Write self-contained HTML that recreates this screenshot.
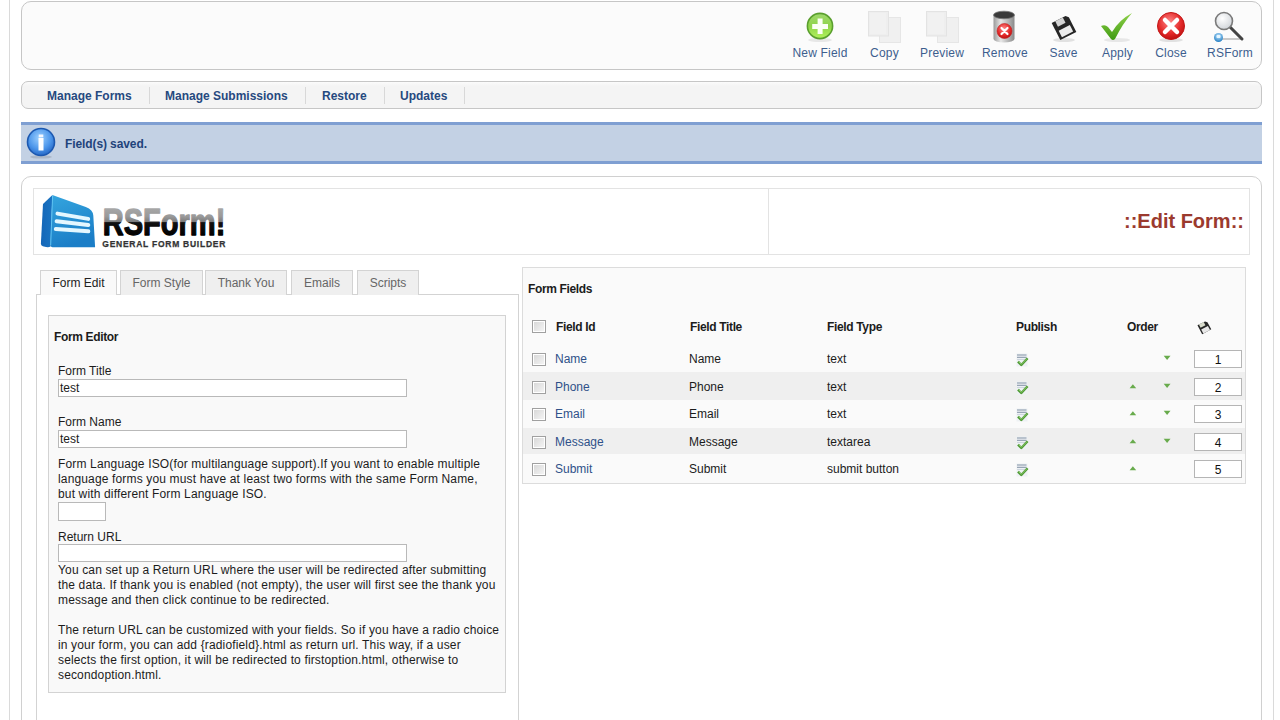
<!DOCTYPE html>
<html><head><meta charset="utf-8">
<style>
*{box-sizing:border-box;margin:0;padding:0}
html,body{width:1280px;height:720px;overflow:hidden;background:#fff}
body{position:relative;font-family:"Liberation Sans",sans-serif;font-size:12px;color:#1c1c1c}
.a{position:absolute}
.t{position:absolute;white-space:nowrap;line-height:15px}
.vl{position:absolute;top:0;width:1px;height:720px;background:#dadada}
#toolbar{left:21px;top:1px;width:1241px;height:69px;border:1px solid #c6c6c6;border-radius:10px;background:#fbfbfb}
#submenu{left:21px;top:81px;width:1241px;height:28px;border:1px solid #c6c6c6;border-radius:7px;background:linear-gradient(#fbfbfb,#f4f4f4 4px,#f4f4f4)}
#msg{left:21px;top:122px;width:1241px;height:42px;border-top:3px solid #7f9fd2;border-bottom:3px solid #7f9fd2;background:#c3d1e4}
#main{left:21px;top:176px;width:1241px;height:600px;border:1px solid #d0d0d0;border-radius:10px;background:#fff}
#hdr{left:33px;top:188px;width:1217px;height:67px;border:1px solid #e3e3e3;background:#fff}
#panel{left:36px;top:294px;width:483px;height:500px;border:1px solid #d3d3d3;background:#fff}
.tab{position:absolute;top:270px;height:25px;border:1px solid #d3d3d3;border-bottom:none;background:#efefef;color:#666;text-align:center;line-height:24px;font-size:12px}
.tab.on{background:#f9f9f9;color:#222;height:25px}
#fs{left:48px;top:315px;width:458px;height:378px;border:1px solid #d3d3d3;background:#f9f9f9}
.inp{position:absolute;height:18px;border:1px solid #b9b9b9;background:#fff;font-size:12px;line-height:15px;padding-left:1px;padding-top:1px}
#ff{left:522px;top:267px;width:724px;height:217px;border:1px solid #dcdcdc;background:#fafafa}
.row2{position:absolute;left:523px;width:722px;background:#efefef}
.sm{position:absolute;font-weight:bold;color:#26497f;font-size:12px}
.sep{position:absolute;top:87px;width:1px;height:17px;background:#d8d8d8}
.tl{position:absolute;top:46px;color:#3d5e8e;font-size:12px;text-align:center;letter-spacing:0.2px}
.lnk{color:#2f5189}
.p{letter-spacing:0.15px}
.b{font-weight:bold;letter-spacing:-0.35px}
.cb{position:absolute;width:14px;height:13px;border:1px solid #a0a0a0;box-shadow:inset 0 0 0 1px #fff;background:linear-gradient(135deg,#d6d6d6,#f6f6f6)}
.ord{position:absolute;width:48px;height:18px;border:1px solid #b5b5b5;background:#fff;text-align:center;line-height:16px;padding-top:1px;font-size:12px;color:#111}
</style></head><body>
<div class="vl" style="left:9px"></div>
<div class="vl" style="left:1273px"></div>

<div id="toolbar" class="a"></div>
<div id="submenu" class="a"></div>
<div id="msg" class="a"></div>
<div id="main" class="a"></div>
<div id="hdr" class="a"></div>
<div class="a" style="left:768px;top:188px;width:1px;height:67px;background:#e3e3e3"></div>


<!-- toolbar icons -->
<svg class="a" style="left:790px;top:8px" width="470" height="40" viewBox="790 8 470 40">
 <defs>
  <radialGradient id="gG" cx="0.45" cy="0.35" r="0.7"><stop offset="0" stop-color="#c9f08a"/><stop offset="0.6" stop-color="#8fd23c"/><stop offset="1" stop-color="#5aa51c"/></radialGradient>
  <linearGradient id="gG2" x1="0" y1="0" x2="0" y2="1"><stop offset="0" stop-color="#9fd86e"/><stop offset="0.5" stop-color="#8fd449"/><stop offset="1" stop-color="#b2f25c"/></linearGradient>
  <radialGradient id="rG" cx="0.45" cy="0.35" r="0.7"><stop offset="0" stop-color="#ff8b8b"/><stop offset="0.6" stop-color="#e42a2a"/><stop offset="1" stop-color="#b70d0d"/></radialGradient>
  <linearGradient id="binG" x1="0" x2="1"><stop offset="0" stop-color="#9a9a9a"/><stop offset="0.35" stop-color="#e8e8e8"/><stop offset="1" stop-color="#8a8a8a"/></linearGradient>
  <linearGradient id="chkG" x1="0" y1="0" x2="0" y2="1"><stop offset="0" stop-color="#8fd14a"/><stop offset="1" stop-color="#3f9a12"/></linearGradient>
  <radialGradient id="lensG" cx="0.4" cy="0.35" r="0.7"><stop offset="0" stop-color="#ffffff"/><stop offset="1" stop-color="#cfd3d8"/></radialGradient>
  <radialGradient id="dotG" cx="0.5" cy="0.35" r="0.6"><stop offset="0" stop-color="#bfe6ff"/><stop offset="1" stop-color="#2f86c8"/></radialGradient>
 </defs>
 <!-- new field -->
 <ellipse cx="820" cy="40" rx="12" ry="2" fill="#000" opacity="0.08"/>
 <circle cx="820" cy="26" r="12.6" fill="url(#gG2)" stroke="#5a9f2e" stroke-width="1.6"/>
 <path d="M817.6 18.6h5v5.3h5.4v5h-5.4v5h-5v-5h-5.4v-5h5.4z" fill="#fbfff5"/>
 <!-- copy -->
 <rect x="879.5" y="17.5" width="21" height="25" fill="#f0f0f0" stroke="#e6e6e6"/>
 <rect x="868.5" y="11.5" width="20" height="24.5" fill="#eeeeee" stroke="#e3e3e3"/>
 <rect x="870" y="13" width="16" height="21" fill="#f1f1f1"/>
 <!-- preview -->
 <rect x="937.5" y="17.5" width="21" height="25" fill="#f0f0f0" stroke="#e6e6e6"/>
 <rect x="926.5" y="11.5" width="20" height="24.5" fill="#eeeeee" stroke="#e3e3e3"/>
 <rect x="928" y="13" width="16" height="21" fill="#f1f1f1"/>
 <!-- remove bin -->
 <path d="M993.5 15 v24 a10.5 3.5 0 0 0 21 0 v-24z" fill="url(#binG)"/>
 <ellipse cx="1004" cy="15" rx="10.5" ry="3.8" fill="#3a3a3a" stroke="#777" stroke-width="0.8"/>
 <circle cx="1004.5" cy="31" r="7.5" fill="url(#rG)" stroke="#c02020" stroke-width="0.6"/>
 <path d="M1001.5 28l6 6M1007.5 28l-6 6" stroke="#fff" stroke-width="2.2" stroke-linecap="round"/>
 <!-- save floppy -->
 <g transform="rotate(-27 1064 27.5)">
  <path d="M1055 18h15.5l2.5 2.5v16.5h-18z" fill="#262626"/>
  <rect x="1059" y="18" width="8.5" height="6" fill="#d4d4d4"/>
  <rect x="1057.8" y="28" width="12.5" height="7.2" fill="#ececec"/>
 </g>
 <ellipse cx="1064" cy="40" rx="11" ry="2" fill="#000" opacity="0.1"/>
 <!-- apply check -->
 <ellipse cx="1117" cy="40" rx="13" ry="2" fill="#000" opacity="0.08"/>
 <path d="M1101 26 q4 -2 7 1 l4 5 q7 -12 20 -19 q-9 10 -17 26 q-2 2 -4 0 z" fill="url(#chkG)"/>
 <!-- close -->
 <ellipse cx="1171" cy="40" rx="12" ry="2" fill="#000" opacity="0.1"/>
 <circle cx="1171" cy="26" r="13.5" fill="url(#rG)" stroke="#c41818" stroke-width="1"/>
 <path d="M1165 20l12 12M1177 20l-12 12" stroke="#fff" stroke-width="4.5" stroke-linecap="round"/>
 <!-- rsform magnifier -->
 <path d="M1220 39 h22" stroke="#b5b5b5" stroke-width="2" opacity="0.7"/>
 <path d="M1230 27 l12 12" stroke="#444" stroke-width="3" stroke-linecap="round"/>
 <circle cx="1224" cy="21" r="8.5" fill="url(#lensG)" stroke="#7a7a7a" stroke-width="1.6"/>
 <circle cx="1218.5" cy="37.5" r="4.5" fill="url(#dotG)"/>
 <rect x="1216.5" y="35" width="4" height="3" rx="1" fill="#e6f6ff"/>
</svg>
<div class="tl" style="left:792px;width:56px">New Field</div>
<div class="tl" style="left:870px;width:29px">Copy</div>
<div class="tl" style="left:920px;width:44px">Preview</div>
<div class="tl" style="left:982px;width:45px">Remove</div>
<div class="tl" style="left:1049px;width:29px">Save</div>
<div class="tl" style="left:1102px;width:30px">Apply</div>
<div class="tl" style="left:1155px;width:32px">Close</div>
<div class="tl" style="left:1207px;width:46px">RSForm</div>

<!-- submenu -->
<div class="sm t" style="left:47px;top:89px">Manage Forms</div>
<div class="sep" style="left:149px"></div>
<div class="sm t" style="left:165px;top:89px">Manage Submissions</div>
<div class="sep" style="left:305px"></div>
<div class="sm t" style="left:322px;top:89px">Restore</div>
<div class="sep" style="left:384px"></div>
<div class="sm t" style="left:400px;top:89px">Updates</div>
<div class="sep" style="left:464px"></div>

<!-- message -->
<svg class="a" style="left:25px;top:126px" width="34" height="34" viewBox="0 0 34 34">
 <defs><radialGradient id="iG" cx="0.45" cy="0.35" r="0.7"><stop offset="0" stop-color="#9cd0ff"/><stop offset="0.6" stop-color="#4b95ea"/><stop offset="1" stop-color="#1f5fbf"/></radialGradient></defs>
 <ellipse cx="16" cy="31" rx="11" ry="1.6" fill="#000" opacity="0.12"/>
 <circle cx="16" cy="16" r="13.5" fill="url(#iG)" stroke="#1c58b0" stroke-width="1.6"/>
 <rect x="13.5" y="12" width="5" height="12.5" fill="#fff"/>
 <rect x="13.7" y="8.5" width="4.6" height="2.8" fill="#f4f8ff"/>
</svg>
<div class="t" style="left:65px;top:137px;font-weight:bold;color:#1f437b;letter-spacing:-0.1px">Field(s) saved.</div>

<!-- logo -->
<svg class="a" style="left:38px;top:192px" width="60" height="60" viewBox="38 192 60 60">
 <defs>
  <linearGradient id="frontG" x1="0" y1="0" x2="0.3" y2="1"><stop offset="0" stop-color="#35a6df"/><stop offset="1" stop-color="#1b7ec7"/></linearGradient>
  <linearGradient id="sideG" x1="0" x2="1"><stop offset="0" stop-color="#1466b8"/><stop offset="1" stop-color="#1a74c2"/></linearGradient>
  <filter id="glow" x="-20%" y="-100%" width="140%" height="300%"><feGaussianBlur stdDeviation="0.5"/></filter>
 </defs>
 <path d="M43 204 L52.4 195 L50.5 246.5 Q49 247.5 46 247 L42.8 246.3 Q40.8 245.8 40.9 243.5 Z" fill="url(#sideG)"/>
 <path d="M52.4 195 L85.8 207 Q93 209.8 93.3 215.5 L95.1 247.2 L52.5 247.2 Q50.2 247 50.2 244.5 Z" fill="url(#frontG)"/>
 <path d="M52.6 196 L50.7 245" stroke="#5fc3f2" stroke-width="1" fill="none"/>
 <g filter="url(#glow)">
 <path d="M57.5 213.6 L88.2 218.9" stroke="#e4f7ff" stroke-width="4" stroke-linecap="round"/>
 <path d="M56.6 221.2 L88.3 225.1" stroke="#e4f7ff" stroke-width="4" stroke-linecap="round"/>
 <path d="M55.8 229.1 L88.3 231.3" stroke="#e4f7ff" stroke-width="4" stroke-linecap="round"/>
 </g>
</svg>
<svg class="a" style="left:100px;top:200px" width="132" height="52" viewBox="0 0 132 52">
 <defs><linearGradient id="txtG" gradientUnits="userSpaceOnUse" x1="0" y1="8" x2="0" y2="36"><stop offset="0" stop-color="#a8a8a8"/><stop offset="0.3" stop-color="#999"/><stop offset="0.5" stop-color="#7a7a7a"/><stop offset="0.52" stop-color="#111"/><stop offset="1" stop-color="#000"/></linearGradient></defs>
 <text x="2.8" y="35.2" font-family="Liberation Sans" font-weight="bold" font-size="37" fill="url(#txtG)" stroke="url(#txtG)" stroke-width="1.3" stroke-linejoin="round" textLength="122.5" lengthAdjust="spacingAndGlyphs">RSForm!</text>
 <text x="2.3" y="46.8" font-family="Liberation Sans" font-weight="bold" font-size="8.5" fill="#333" stroke="#333" stroke-width="0.25" textLength="123" lengthAdjust="spacing">GENERAL FORM BUILDER</text>
</svg>
<div class="t" style="left:1124px;top:209px;font-size:20px;line-height:24px;font-weight:bold;color:#9b3a2e">::Edit Form::</div>

<!-- tabs & panel -->
<div id="panel" class="a"></div>
<div class="tab on" style="left:40px;width:77px">Form Edit</div>
<div class="tab" style="left:120px;width:83px">Form Style</div>
<div class="tab" style="left:205px;width:82px">Thank You</div>
<div class="tab" style="left:291px;width:62px">Emails</div>
<div class="tab" style="left:357px;width:62px">Scripts</div>
<div class="a" style="left:41px;top:294px;width:75px;height:1px;background:#f9f9f9"></div>

<!-- fieldset -->
<div id="fs" class="a"></div>
<div class="t b" style="left:54px;top:330px">Form Editor</div>
<div class="t" style="left:58px;top:364px">Form Title</div>
<div class="inp" style="left:58px;top:379px;width:349px">test</div>
<div class="t" style="left:58px;top:415px">Form Name</div>
<div class="inp" style="left:58px;top:430px;width:349px">test</div>
<div class="t p" style="left:58px;top:457px">Form Language ISO(for multilanguage support).If you want to enable multiple<br>language forms you must have at least two forms with the same Form Name,<br>but with different Form Language ISO.</div>
<div class="inp" style="left:58px;top:502px;width:48px;height:19px"></div>
<div class="t" style="left:58px;top:530px">Return URL</div>
<div class="inp" style="left:58px;top:544px;width:349px;height:18px"></div>
<div class="t p" style="left:58px;top:563px">You can set up a Return URL where the user will be redirected after submitting<br>the data. If thank you is enabled (not empty), the user will first see the thank you<br>message and then click continue to be redirected.<br><br>The return URL can be customized with your fields. So if you have a radio choice<br>in your form, you can add {radiofield}.html as return url. This way, if a user<br>selects the first option, it will be redirected to firstoption.html, otherwise to<br>secondoption.html.</div>

<!-- form fields -->
<div id="ff" class="a"></div>
<div class="row2" style="top:372px;height:28px"></div>
<div class="row2" style="top:428px;height:26px"></div>
<div class="t b" style="left:528px;top:282px">Form Fields</div>
<div class="cb" style="left:532px;top:320px"></div>
<div class="t b" style="left:556px;top:320px">Field Id</div>
<div class="t b" style="left:690px;top:320px">Field Title</div>
<div class="t b" style="left:827px;top:320px">Field Type</div>
<div class="t b" style="left:1016px;top:320px">Publish</div>
<div class="t b" style="left:1127px;top:320px">Order</div>
<svg class="a" style="left:1196px;top:319px" width="16" height="16" viewBox="0 0 16 16">
 <g transform="rotate(-28 8 8)"><path d="M3 3.5h8.5l1.8 1.8v8.2H3z" fill="#262626"/><rect x="4.6" y="3.5" width="5.5" height="3.6" fill="#d8dccc"/><rect x="4.3" y="9" width="7.6" height="4.5" fill="#e8e8e8"/></g>
</svg>
<div class="cb" style="left:532px;top:353px"></div>
<div class="t lnk" style="left:555px;top:352px">Name</div>
<div class="t" style="left:689px;top:352px">Name</div>
<div class="t" style="left:827px;top:352px">text</div>
<svg class="a" style="left:1016px;top:353px" width="13" height="14" viewBox="0 0 13 14"><rect x="0.5" y="0.5" width="11" height="13" fill="#eef1f4"/><path d="M1 2h9.5M1 4.3h9.5" stroke="#8393a6" stroke-width="1"/><path d="M1 6.5h8" stroke="#c5cfd9" stroke-width="0.8"/><path d="M2 8.6 L5.3 12 L11.6 5.2" stroke="#4f9a35" stroke-width="2.4" fill="none" stroke-linejoin="round"/><path d="M2.6 8.6 L5.3 11.3 L11 5.6" stroke="#9ad47a" stroke-width="0.8" fill="none"/></svg>
<svg class="a" style="left:1163px;top:355px" width="9" height="6" viewBox="0 0 9 6"><path d="M0.7 0.8 L7.5 0.8 L4.1 4.9z" fill="#68ab4c"/></svg>
<div class="ord" style="left:1194px;top:350px">1</div>
<div class="cb" style="left:532px;top:381px"></div>
<div class="t lnk" style="left:555px;top:380px">Phone</div>
<div class="t" style="left:689px;top:380px">Phone</div>
<div class="t" style="left:827px;top:380px">text</div>
<svg class="a" style="left:1016px;top:381px" width="13" height="14" viewBox="0 0 13 14"><rect x="0.5" y="0.5" width="11" height="13" fill="#eef1f4"/><path d="M1 2h9.5M1 4.3h9.5" stroke="#8393a6" stroke-width="1"/><path d="M1 6.5h8" stroke="#c5cfd9" stroke-width="0.8"/><path d="M2 8.6 L5.3 12 L11.6 5.2" stroke="#4f9a35" stroke-width="2.4" fill="none" stroke-linejoin="round"/><path d="M2.6 8.6 L5.3 11.3 L11 5.6" stroke="#9ad47a" stroke-width="0.8" fill="none"/></svg>
<svg class="a" style="left:1129px;top:383px" width="9" height="6" viewBox="0 0 9 6"><path d="M0.6 5.3 L3.9 1.2 L7.2 5.3z" fill="#68ab4c"/></svg>
<svg class="a" style="left:1163px;top:383px" width="9" height="6" viewBox="0 0 9 6"><path d="M0.7 0.8 L7.5 0.8 L4.1 4.9z" fill="#68ab4c"/></svg>
<div class="ord" style="left:1194px;top:378px">2</div>
<div class="cb" style="left:532px;top:408px"></div>
<div class="t lnk" style="left:555px;top:407px">Email</div>
<div class="t" style="left:689px;top:407px">Email</div>
<div class="t" style="left:827px;top:407px">text</div>
<svg class="a" style="left:1016px;top:408px" width="13" height="14" viewBox="0 0 13 14"><rect x="0.5" y="0.5" width="11" height="13" fill="#eef1f4"/><path d="M1 2h9.5M1 4.3h9.5" stroke="#8393a6" stroke-width="1"/><path d="M1 6.5h8" stroke="#c5cfd9" stroke-width="0.8"/><path d="M2 8.6 L5.3 12 L11.6 5.2" stroke="#4f9a35" stroke-width="2.4" fill="none" stroke-linejoin="round"/><path d="M2.6 8.6 L5.3 11.3 L11 5.6" stroke="#9ad47a" stroke-width="0.8" fill="none"/></svg>
<svg class="a" style="left:1129px;top:410px" width="9" height="6" viewBox="0 0 9 6"><path d="M0.6 5.3 L3.9 1.2 L7.2 5.3z" fill="#68ab4c"/></svg>
<svg class="a" style="left:1163px;top:410px" width="9" height="6" viewBox="0 0 9 6"><path d="M0.7 0.8 L7.5 0.8 L4.1 4.9z" fill="#68ab4c"/></svg>
<div class="ord" style="left:1194px;top:405px">3</div>
<div class="cb" style="left:532px;top:436px"></div>
<div class="t lnk" style="left:555px;top:435px">Message</div>
<div class="t" style="left:689px;top:435px">Message</div>
<div class="t" style="left:827px;top:435px">textarea</div>
<svg class="a" style="left:1016px;top:436px" width="13" height="14" viewBox="0 0 13 14"><rect x="0.5" y="0.5" width="11" height="13" fill="#eef1f4"/><path d="M1 2h9.5M1 4.3h9.5" stroke="#8393a6" stroke-width="1"/><path d="M1 6.5h8" stroke="#c5cfd9" stroke-width="0.8"/><path d="M2 8.6 L5.3 12 L11.6 5.2" stroke="#4f9a35" stroke-width="2.4" fill="none" stroke-linejoin="round"/><path d="M2.6 8.6 L5.3 11.3 L11 5.6" stroke="#9ad47a" stroke-width="0.8" fill="none"/></svg>
<svg class="a" style="left:1129px;top:438px" width="9" height="6" viewBox="0 0 9 6"><path d="M0.6 5.3 L3.9 1.2 L7.2 5.3z" fill="#68ab4c"/></svg>
<svg class="a" style="left:1163px;top:438px" width="9" height="6" viewBox="0 0 9 6"><path d="M0.7 0.8 L7.5 0.8 L4.1 4.9z" fill="#68ab4c"/></svg>
<div class="ord" style="left:1194px;top:433px">4</div>
<div class="cb" style="left:532px;top:463px"></div>
<div class="t lnk" style="left:555px;top:462px">Submit</div>
<div class="t" style="left:689px;top:462px">Submit</div>
<div class="t" style="left:827px;top:462px">submit button</div>
<svg class="a" style="left:1016px;top:463px" width="13" height="14" viewBox="0 0 13 14"><rect x="0.5" y="0.5" width="11" height="13" fill="#eef1f4"/><path d="M1 2h9.5M1 4.3h9.5" stroke="#8393a6" stroke-width="1"/><path d="M1 6.5h8" stroke="#c5cfd9" stroke-width="0.8"/><path d="M2 8.6 L5.3 12 L11.6 5.2" stroke="#4f9a35" stroke-width="2.4" fill="none" stroke-linejoin="round"/><path d="M2.6 8.6 L5.3 11.3 L11 5.6" stroke="#9ad47a" stroke-width="0.8" fill="none"/></svg>
<svg class="a" style="left:1129px;top:465px" width="9" height="6" viewBox="0 0 9 6"><path d="M0.6 5.3 L3.9 1.2 L7.2 5.3z" fill="#68ab4c"/></svg>
<div class="ord" style="left:1194px;top:460px">5</div>
</body></html>
